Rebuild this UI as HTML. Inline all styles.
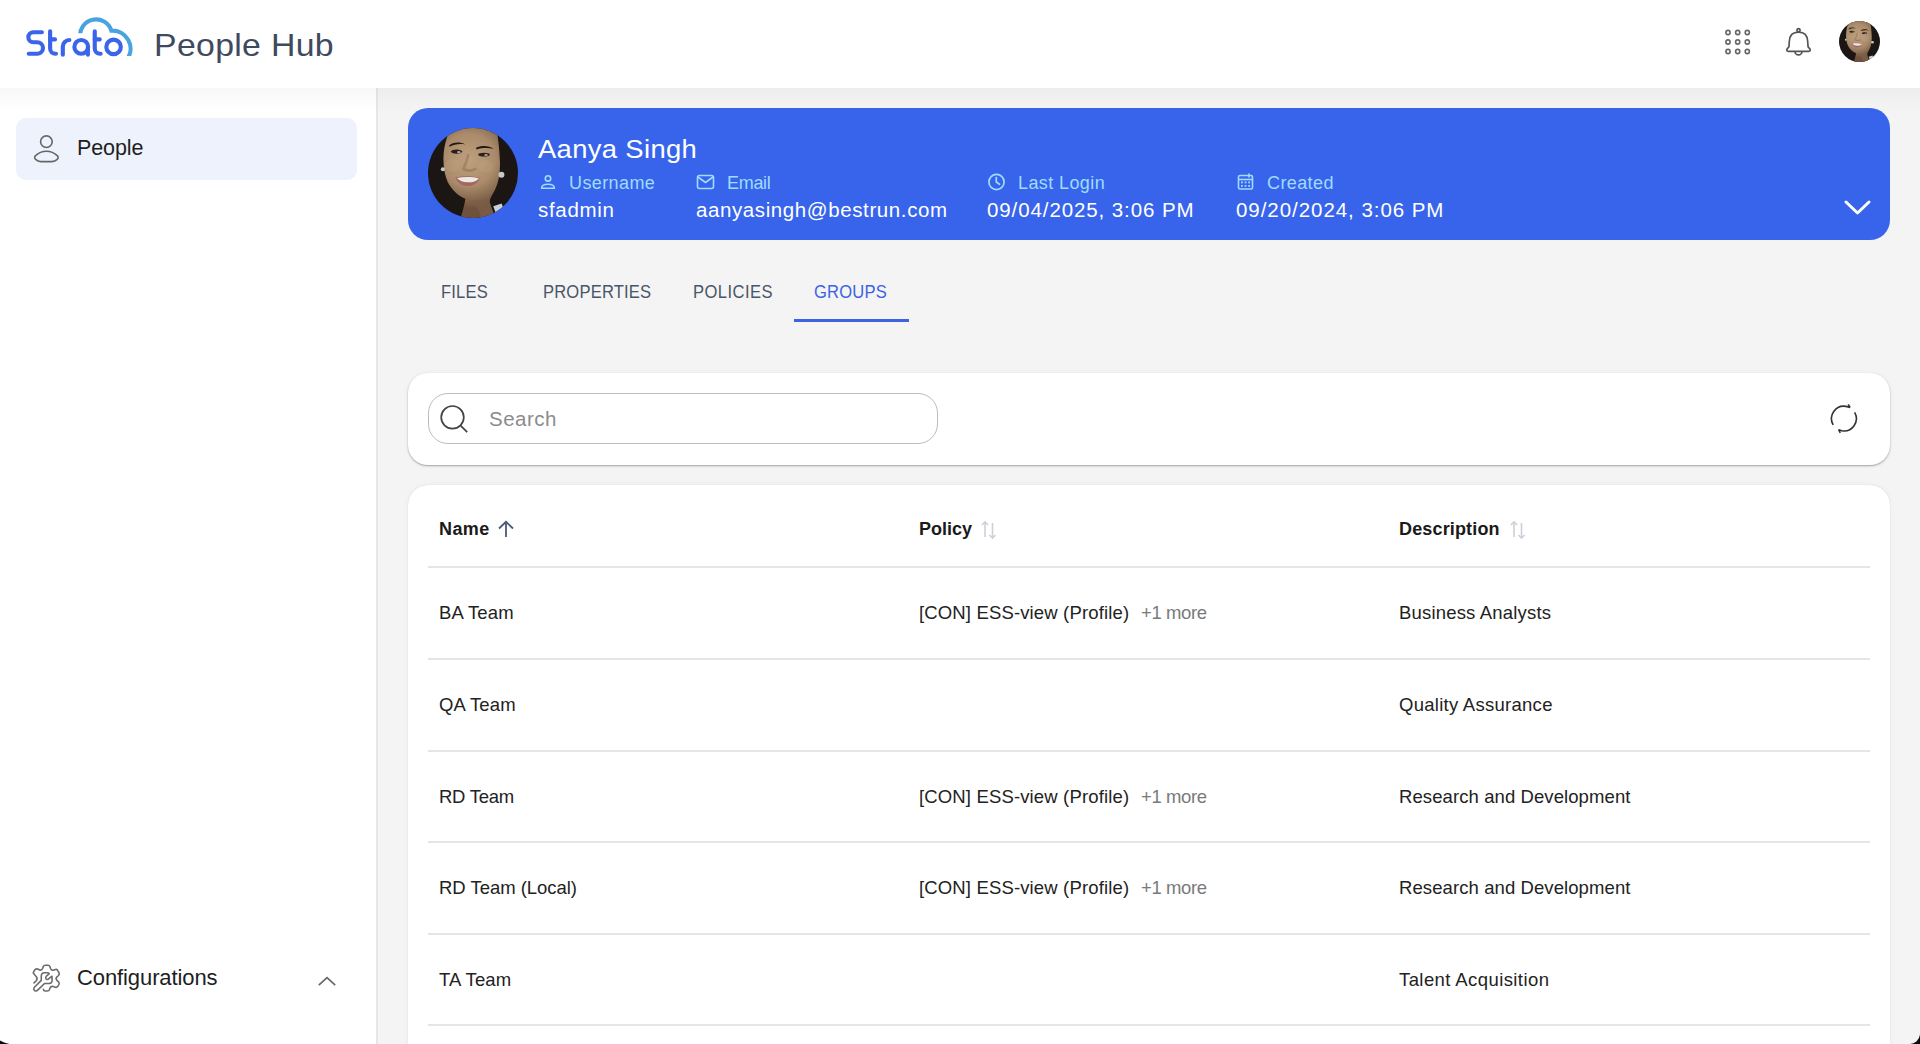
<!DOCTYPE html>
<html><head><meta charset="utf-8">
<style>
*{box-sizing:border-box;margin:0;padding:0}
html,body{width:1920px;height:1044px;overflow:hidden;background:#f4f4f4;font-family:"Liberation Sans",sans-serif;}
.abs{position:absolute}
.t{position:absolute;white-space:nowrap;line-height:1}
#header{position:absolute;left:0;top:0;width:1920px;height:88px;background:#fff;z-index:5}
#hshadow{position:absolute;left:0;top:88px;width:1920px;height:26px;background:linear-gradient(to bottom,rgba(0,0,0,0.03),rgba(0,0,0,0.018) 30%,rgba(0,0,0,0.008) 60%,rgba(0,0,0,0));z-index:4}
#sidebar{position:absolute;left:0;top:88px;width:378px;height:956px;background:#fff;border-right:2px solid #e6e6e6}
.card{position:absolute;background:#fff;border-radius:20px}
.tab{top:282.5px;font-size:18px;letter-spacing:0.2px;transform:scaleX(0.92);transform-origin:0 0}
.th{font-size:18px;font-weight:bold;color:#1a1a1a}
.td{font-size:18.5px;color:#222;letter-spacing:0.15px}
.more{color:#7a7a7a;letter-spacing:-0.4px}
.desc{letter-spacing:0.18px}
</style></head>
<body>
<svg width="0" height="0" style="position:absolute">
  <defs>
    <clipPath id="avclip"><circle cx="522" cy="522" r="484"/></clipPath>
    <radialGradient id="skin" gradientUnits="userSpaceOnUse" cx="480" cy="380" r="520">
      <stop offset="0" stop-color="#bfa07e"/>
      <stop offset="0.55" stop-color="#a98a6a"/>
      <stop offset="1" stop-color="#6e523d"/>
    </radialGradient>
    <symbol id="face" viewBox="38 38 968 968">
      <g clip-path="url(#avclip)">
        <rect x="0" y="0" width="1044" height="1044" fill="#1b1513"/>
        <path d="M 290,30 L 770,30 C 790,120 805,250 812,400 C 815,520 800,620 760,700 C 730,760 700,800 700,840 C 720,900 760,960 760,1044 L 380,1044 C 400,960 430,880 440,800 C 360,770 290,700 250,620 C 215,540 200,440 205,340 C 210,230 240,120 290,30 Z" fill="url(#skin)"/>
        <path d="M 440,800 C 520,830 620,820 700,790 C 700,860 740,930 760,1044 L 600,1044 C 620,960 580,880 440,800 Z" fill="#7e6049" opacity="0.7"/>
        <path d="M 740,880 L 830,850 L 860,930 L 770,960 Z" fill="#c9d2d6"/>
        <path d="M 265,225 C 300,190 380,180 440,215 C 380,205 320,210 270,240 Z" fill="#241814"/>
        <path d="M 555,250 C 610,225 690,225 745,262 C 690,250 620,250 560,268 Z" fill="#241814"/>
        <ellipse cx="345" cy="292" rx="62" ry="22" fill="#2a1e19"/>
        <ellipse cx="640" cy="325" rx="62" ry="20" fill="#2a1e19"/>
        <ellipse cx="370" cy="296" rx="20" ry="9" fill="#d8d2cc"/>
        <ellipse cx="662" cy="328" rx="20" ry="8" fill="#d8d2cc"/>
        <path d="M 470,330 C 455,400 430,450 420,480 C 450,500 510,500 545,480" fill="none" stroke="#7a5c47" stroke-width="30" stroke-linecap="round" opacity="0.35"/>
        <ellipse cx="300" cy="440" rx="80" ry="70" fill="#cdb090" opacity="0.18"/>
        <ellipse cx="660" cy="450" rx="80" ry="70" fill="#cdb090" opacity="0.18"/>
        <path d="M 335,570 C 420,550 520,555 595,575 C 570,640 510,665 460,662 C 400,660 355,630 335,570 Z" fill="#a56763"/>
        <path d="M 350,575 C 430,560 520,562 585,580 C 560,612 510,625 465,622 C 415,620 375,605 350,575 Z" fill="#ece8e2"/>
        <circle cx="198" cy="482" r="22" fill="#c8c8c2"/>
        <circle cx="828" cy="540" r="32" fill="#c8c8c2"/>
      </g>
    </symbol>
  </defs>
</svg>
<div id="header">
  <!-- logo -->
  <svg class="abs" style="left:20px;top:10px" width="120" height="55" viewBox="0 0 1920 880">
    <g fill="none" stroke="#3a64e9" stroke-width="66" stroke-linecap="round">
      <path d="M 350,356 H 213 A 79.5,79.5 0 0 0 213,515 H 275 A 92.5,92.5 0 0 1 275,700 H 140"/>
      <path d="M 482,340 V 615 A 85,85 0 0 0 567,700 H 575"/>
      <path d="M 482,470 H 560"/>
      <path d="M 685,715 V 585 A 105,105 0 0 1 790,480"/>
      <circle cx="980" cy="590" r="110"/>
      <path d="M 1086,590 V 715"/>
      <path d="M 1196,340 V 615 A 85,85 0 0 0 1281,700 H 1290"/>
      <path d="M 1196,470 H 1275"/>
      <circle cx="1497" cy="590" r="116"/>
    </g>
    <clipPath id="cloudclip"><path d="M0,0 H1920 V735 H1100 V372 H0 Z"/></clipPath>
    <g fill="none" stroke="#48a3e0" stroke-width="66" clip-path="url(#cloudclip)">
      <path d="M 962,440 A 257,257 0 0 1 1462,330 A 290,290 0 0 1 1720,780"/>
    </g>
  </svg>
  <div class="t" style="left:154px;top:29px;font-size:32px;color:#3f4a5f;letter-spacing:0.3px;transform:scaleX(1.057);transform-origin:0 0">People Hub</div>
  <!-- top right icons -->
  <svg class="abs" style="left:1722.5px;top:27px" width="30" height="30" viewBox="0 0 30 30">
    <g fill="none" stroke="#666" stroke-width="1.6">
      <circle cx="5" cy="5.5" r="2.1"/><circle cx="14.7" cy="5.5" r="2.1"/><circle cx="24.3" cy="5.5" r="2.1"/>
      <circle cx="5" cy="15" r="2.1"/><circle cx="14.7" cy="15" r="2.1"/><circle cx="24.3" cy="15" r="2.1"/>
      <circle cx="5" cy="24.5" r="2.1"/><circle cx="14.7" cy="24.5" r="2.1"/><circle cx="24.3" cy="24.5" r="2.1"/>
    </g>
  </svg>
  <svg class="abs" style="left:1783px;top:26px" width="32" height="32" viewBox="0 0 32 32">
    <g fill="none" stroke="#555" stroke-width="1.7" stroke-linejoin="round">
      <circle cx="15.5" cy="4.3" r="1.6"/>
      <path d="M 15.5,6.2 C 9.8,6.2 6.5,9.8 6.3,15.5 L 6.0,20.3 C 5.8,21.9 3.7,22.5 3.7,24 C 3.7,24.9 4.4,25.3 5.3,25.3 L 25.7,25.3 C 26.6,25.3 27.3,24.9 27.3,24 C 27.3,22.5 25.2,21.9 25.0,20.3 L 24.7,15.5 C 24.5,9.8 21.2,6.2 15.5,6.2 Z"/>
      <path d="M 12.0,25.4 A 3.5,3.5 0 0 0 19.0,25.4"/>
    </g>
  </svg>
  <svg class="abs" style="left:1839px;top:21px" width="41" height="41" viewBox="0 0 1044 1044"><use href="#face"/></svg>
</div>
<div id="hshadow"></div>

<div id="sidebar">
  <div class="abs" style="left:16px;top:30px;width:341px;height:62px;background:#eef2fc;border-radius:10px"></div>
  <svg class="abs" style="left:32px;top:44px" width="30" height="34" viewBox="0 0 30 34">
    <g fill="none" stroke="#666" stroke-width="1.6">
      <circle cx="14.4" cy="9.7" r="5.8"/>
      <path d="M 14.4,19.2 C 9.5,19.2 5.5,21.8 3.3,23.9 C 2.2,25 2.6,26.5 3.6,27.4 C 5,28.8 6.5,29.6 8.8,29.6 L 20,29.6 C 22.3,29.6 23.8,28.8 25.2,27.4 C 26.2,26.5 26.6,25 25.5,23.9 C 23.3,21.8 19.3,19.2 14.4,19.2 Z"/>
    </g>
  </svg>
  <div class="t" style="left:77px;top:50px;font-size:21.5px;color:#1e1e1e;letter-spacing:-0.1px">People</div>

  <svg class="abs" style="left:28px;top:872px" width="36" height="36" viewBox="0 0 1044 1044">
    <g fill="none" stroke="#6b6b6b" stroke-width="46" stroke-linejoin="round" stroke-linecap="round">
      <path d="M 175,665 L 240,600 C 270,560 260,500 230,470 L 170,400 C 150,380 160,340 175,320 L 215,270 C 240,250 280,260 300,270 L 340,290 C 380,300 420,270 430,230 L 445,180 C 455,155 480,150 510,150 L 580,150 C 610,150 625,165 635,190 L 650,240 C 665,285 710,305 750,290 L 795,275 C 825,265 850,275 860,300 L 905,380 C 915,410 905,430 885,450 L 840,490 C 810,520 810,560 840,590 L 890,640 C 910,665 910,690 895,715 L 860,770 C 840,795 810,795 790,790 L 730,770 C 690,760 650,780 635,820 L 620,865 C 610,890 590,900 560,900 L 500,900 C 465,900 450,880 445,850"/>
      <path d="M 385,590 L 185,790 C 155,820 165,870 200,890 C 230,905 260,895 280,875 L 480,680 L 610,680 C 670,680 700,640 700,580 L 695,470 L 590,555 C 560,580 515,560 515,515 C 515,495 525,480 540,465 L 615,395 C 600,375 580,370 560,370 L 480,370 C 420,370 385,410 385,470 Z"/>
    </g>
  </svg>
  <div class="t" style="left:77px;top:879px;font-size:22px;color:#1e1e1e;letter-spacing:-0.1px">Configurations</div>
  <svg class="abs" style="left:316px;top:885px" width="22" height="16" viewBox="0 0 22 16">
    <path d="M 2.8,12.2 L 11,4.6 L 19.2,12.2" fill="none" stroke="#666" stroke-width="1.6"/>
  </svg>
</div>

<!-- profile card -->
<div class="abs" style="left:408px;top:108px;width:1482px;height:132px;background:#3764eb;border-radius:20px">
  <svg class="abs" style="left:20px;top:20px" width="90" height="90" viewBox="0 0 1044 1044"><use href="#face"/></svg>
  <div class="t" style="left:130px;top:28.5px;font-size:25px;color:#fff;letter-spacing:0.3px;transform:scaleX(1.097);transform-origin:0 0">Aanya Singh</div>
  <svg class="abs" style="left:131px;top:65px" width="18" height="18" viewBox="0 0 18 18">
    <g fill="none" stroke="#9fdcfd" stroke-width="1.6">
      <circle cx="9" cy="5.4" r="2.7"/>
      <path d="M 2.6,15.3 C 2.6,12.2 5.5,11.2 9,11.2 C 12.5,11.2 15.4,12.2 15.4,15.3 Z" stroke-linejoin="round"/>
    </g>
  </svg>
  <div class="t" style="left:161px;top:66px;font-size:18px;color:#9fdcfd;letter-spacing:0.4px">Username</div>
  <div class="t" style="left:130px;top:92px;font-size:20.5px;color:#fff;letter-spacing:0.7px">sfadmin</div>

  <svg class="abs" style="left:288px;top:65px" width="20" height="18" viewBox="0 0 20 18">
    <g fill="none" stroke="#9fdcfd" stroke-width="1.6" stroke-linejoin="round">
      <rect x="1.5" y="2.5" width="16" height="13" rx="2"/>
      <path d="M 2,4 L 9.5,9.5 L 17,4"/>
    </g>
  </svg>
  <div class="t" style="left:319px;top:66px;font-size:18px;color:#9fdcfd;letter-spacing:-0.3px">Email</div>
  <div class="t" style="left:288px;top:92px;font-size:20.5px;color:#fff;letter-spacing:0.6px">aanyasingh@bestrun.com</div>

  <svg class="abs" style="left:579px;top:64px" width="20" height="20" viewBox="0 0 20 20">
    <g fill="none" stroke="#9fdcfd" stroke-width="1.7" stroke-linecap="round">
      <circle cx="9.5" cy="10" r="7.6"/>
      <path d="M 9.3,5.5 V 10 L 12.5,12.3"/>
    </g>
  </svg>
  <div class="t" style="left:610px;top:66px;font-size:18px;color:#9fdcfd;letter-spacing:0.4px">Last Login</div>
  <div class="t" style="left:579px;top:92px;font-size:20.5px;color:#fff;letter-spacing:0.9px">09/04/2025, 3:06 PM</div>

  <svg class="abs" style="left:828px;top:64px" width="20" height="20" viewBox="0 0 20 20">
    <g fill="none" stroke="#9fdcfd" stroke-width="1.6" stroke-linejoin="round">
      <rect x="2.5" y="3.5" width="14" height="13.5" rx="1.5"/>
      <path d="M 13,1.5 V 5.5"/>
      <path d="M 2.5,7.5 H 16.5"/>
    </g>
    <g fill="#9fdcfd">
      <rect x="5" y="9.5" width="1.8" height="1.8"/><rect x="8.6" y="9.5" width="1.8" height="1.8"/><rect x="12.2" y="9.5" width="1.8" height="1.8"/>
      <rect x="5" y="13" width="1.8" height="1.8"/><rect x="8.6" y="13" width="1.8" height="1.8"/><rect x="12.2" y="13" width="1.8" height="1.8"/>
    </g>
  </svg>
  <div class="t" style="left:859px;top:66px;font-size:18px;color:#9fdcfd;letter-spacing:0.4px">Created</div>
  <div class="t" style="left:828px;top:92px;font-size:20.5px;color:#fff;letter-spacing:0.95px">09/20/2024, 3:06 PM</div>

  <svg class="abs" style="left:1434px;top:90px" width="32" height="20" viewBox="0 0 32 20">
    <path d="M 4,4 L 15.5,15 L 27,4" fill="none" stroke="#fff" stroke-width="3" stroke-linecap="round" stroke-linejoin="round"/>
  </svg>
</div>

<!-- tabs -->
<div class="t tab" style="left:441px;color:#4a5568">FILES</div>
<div class="t tab" style="left:543px;color:#4a5568">PROPERTIES</div>
<div class="t tab" style="left:693px;color:#4a5568;letter-spacing:0.5px">POLICIES</div>
<div class="t tab" style="left:814px;color:#3b63e3">GROUPS</div>
<div class="abs" style="left:794px;top:319px;width:115px;height:3px;background:#3b63e3"></div>

<!-- search card -->
<div class="card" style="left:408px;top:373px;width:1482px;height:92px;box-shadow:0 1px 2px rgba(0,0,0,0.33),0 0 6px rgba(0,0,0,0.035)">
  <div class="abs" style="left:20px;top:20px;width:510px;height:51px;border:1.6px solid #bcbcbc;border-radius:20px"></div>
  <svg class="abs" style="left:30px;top:30px" width="34" height="34" viewBox="0 0 34 34">
    <g fill="none" stroke="#444" stroke-width="1.7">
      <circle cx="14.5" cy="14.3" r="11.3"/>
      <path d="M 22.6,22.6 L 29.2,29.2"/>
    </g>
  </svg>
  <div class="t" style="left:81px;top:36px;font-size:20.5px;color:#8c8c8c;letter-spacing:0.5px">Search</div>
  <svg class="abs" style="left:1418px;top:27px" width="36" height="36" viewBox="0 0 36 36">
    <g fill="none" stroke="#333" stroke-width="1.6" stroke-linejoin="round">
      <path d="M 7.16,24.8 A 12.4,12.4 0 0 1 20.05,6.39 L 24.1,7.4"/>
      <path d="M 22.2,4.3 L 24.1,7.4"/>
      <path d="M 28.64,12.4 A 12.4,12.4 0 0 1 15.75,30.81 L 12.6,29.7"/>
      <path d="M 14.3,32.9 L 12.6,29.7"/>
    </g>
  </svg>
</div>

<!-- table card -->
<div class="card" style="left:408px;top:485px;width:1482px;height:620px;box-shadow:0 0 1px rgba(0,0,0,0.2),0 0 6px rgba(0,0,0,0.035)">
  <div class="t th" style="left:31px;top:35px;letter-spacing:0.4px">Name</div>
  <svg class="abs" style="left:89px;top:35px" width="18" height="20" viewBox="0 0 18 20"><g fill="none" stroke="#4b5876" stroke-width="1.8"><path d="M 9,2 V 17"/><path d="M 2,8.5 L 9,1.8 L 16,8.5"/></g></svg>
  <div class="t th" style="left:511px;top:35px">Policy</div>
  <svg class="abs" style="left:572px;top:35px" width="18" height="20" viewBox="0 0 18 20"><g fill="none" stroke="#ccd0d9" stroke-width="1.6"><path d="M 5,2 V 17"/><path d="M 2,5 L 5,1.8 L 8,5"/><path d="M 12.5,3 V 18"/><path d="M 9.5,15 L 12.5,18.2 L 15.5,15"/></g></svg>
  <div class="t th" style="left:991px;top:35px;letter-spacing:0.15px">Description</div>
  <svg class="abs" style="left:1101px;top:35px" width="18" height="20" viewBox="0 0 18 20"><g fill="none" stroke="#ccd0d9" stroke-width="1.6"><path d="M 5,2 V 17"/><path d="M 2,5 L 5,1.8 L 8,5"/><path d="M 12.5,3 V 18"/><path d="M 9.5,15 L 12.5,18.2 L 15.5,15"/></g></svg>
  <div class="abs" style="left:20px;top:81.2px;width:1442px;height:2px;background:#e5e5e5"></div>
  <div class="abs" style="left:20px;top:172.8px;width:1442px;height:2px;background:#e5e5e5"></div>
  <div class="abs" style="left:20px;top:264.5px;width:1442px;height:2px;background:#e5e5e5"></div>
  <div class="abs" style="left:20px;top:356.1px;width:1442px;height:2px;background:#e5e5e5"></div>
  <div class="abs" style="left:20px;top:447.7px;width:1442px;height:2px;background:#e5e5e5"></div>
  <div class="abs" style="left:20px;top:539.4px;width:1442px;height:2px;background:#e5e5e5"></div>
  <div class="t td" style="left:31px;top:119.2px">BA Team</div>
  <div class="t td" style="left:511px;top:119.2px">[CON] ESS-view (Profile)</div>
  <div class="t td more" style="left:733px;top:119.2px">+1 more</div>
  <div class="t td" style="left:991px;top:119.2px;letter-spacing:0.18px">Business Analysts</div>
  <div class="t td" style="left:31px;top:210.9px">QA Team</div>
  <div class="t td" style="left:991px;top:210.9px;letter-spacing:0.27px">Quality Assurance</div>
  <div class="t td" style="left:31px;top:302.7px;letter-spacing:-0.28px">RD Team</div>
  <div class="t td" style="left:511px;top:302.7px">[CON] ESS-view (Profile)</div>
  <div class="t td more" style="left:733px;top:302.7px">+1 more</div>
  <div class="t td" style="left:991px;top:302.7px;letter-spacing:0.09px">Research and Development</div>
  <div class="t td" style="left:31px;top:394.4px;letter-spacing:-0.03px">RD Team (Local)</div>
  <div class="t td" style="left:511px;top:394.4px">[CON] ESS-view (Profile)</div>
  <div class="t td more" style="left:733px;top:394.4px">+1 more</div>
  <div class="t td" style="left:991px;top:394.4px;letter-spacing:0.09px">Research and Development</div>
  <div class="t td" style="left:31px;top:486.2px">TA Team</div>
  <div class="t td" style="left:991px;top:486.2px;letter-spacing:0.41px">Talent Acquisition</div>
</div>

<svg class="abs" style="left:0;top:0;z-index:20;pointer-events:none" width="1920" height="1044" viewBox="0 0 1920 1044">
  <path d="M 1920,1034.5 A 10.5,10.5 0 0 1 1909,1044 L 1920,1044 Z" fill="#0a0a0a"/>
  <path d="M 0,1040.6 C 2.5,1041.8 5.5,1043.3 9.5,1044 L 0,1044 Z" fill="#0a0a0a"/>
</svg>
</body></html>
